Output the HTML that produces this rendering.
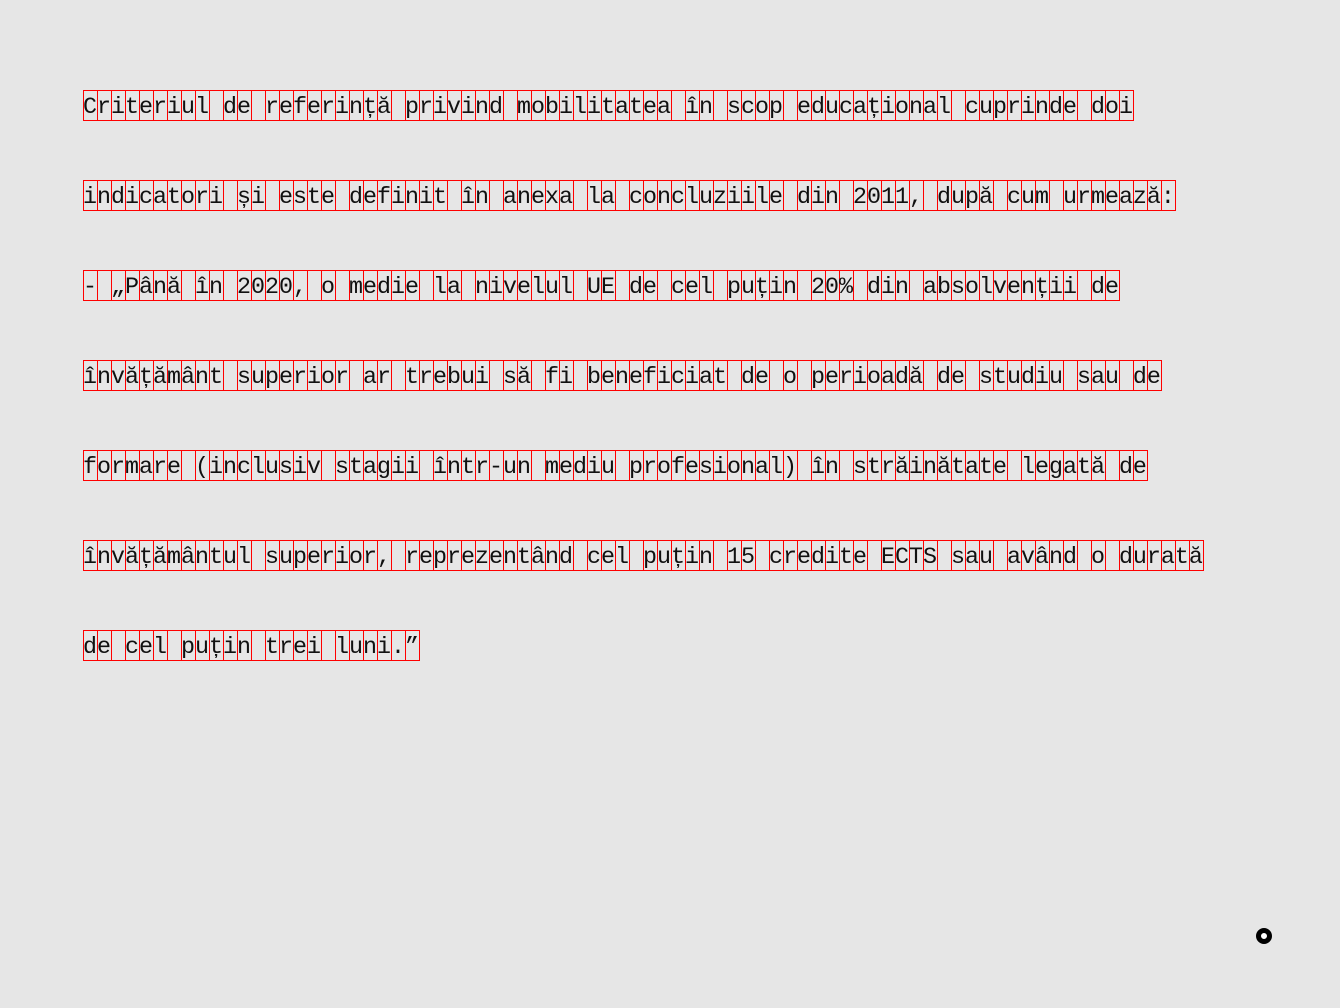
<!DOCTYPE html>
<html><head><meta charset="utf-8"><style>
html,body{margin:0;padding:0;background:#e6e6e6;width:1340px;height:1008px;overflow:hidden;position:relative}
.l{position:absolute;left:83px;height:26px;padding-top:3px;border-top:1px solid #f00;border-bottom:1px solid #f00;
background:repeating-linear-gradient(to right,#f00 0 1px,transparent 1px 14px);
padding-right:1px;font-family:"Liberation Mono",monospace;font-size:23.33px;line-height:29px;color:#111;white-space:pre}
.c{position:absolute;left:1256px;top:928px;width:6px;height:6px;border:5px solid #000;border-radius:50%;background:#fff}
</style></head><body>
<div class="l" style="top:90px">Criteriul de referință privind mobilitatea în scop educațional cuprinde doi</div>
<div class="l" style="top:180px">indicatori și este definit în anexa la concluziile din 2011, după cum urmează:</div>
<div class="l" style="top:270px">- „Până în 2020, o medie la nivelul UE de cel puțin 20% din absolvenții de</div>
<div class="l" style="top:360px">învățământ superior ar trebui să fi beneficiat de o perioadă de studiu sau de</div>
<div class="l" style="top:450px">formare (inclusiv stagii într-un mediu profesional) în străinătate legată de</div>
<div class="l" style="top:540px">învățământul superior, reprezentând cel puțin 15 credite ECTS sau având o durată</div>
<div class="l" style="top:630px">de cel puțin trei luni.”</div>
<div class="c"></div>
</body></html>
